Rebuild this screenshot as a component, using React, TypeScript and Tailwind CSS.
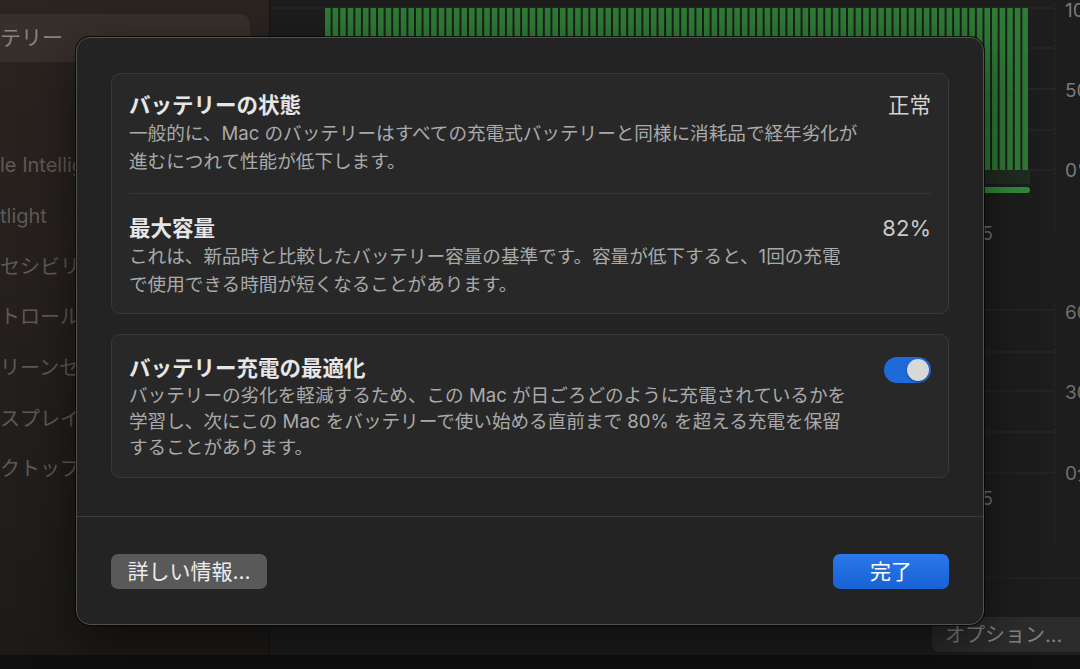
import React from 'react'

const sidebarItems = [
  'le Intelligence & Siri',
  'tlight',
  'セシビリティ',
  'トロールセンター',
  'リーンセーバ',
  'スプレイ',
  'クトップとDock',
]

const bars = Array.from({ length: 93 }, (_, i) => i)

const Chart = () => (
  <svg width="810" height="605" className="block">
    {/* 上のグラフ */}
    {[8, 48, 89, 130, 170].map((y) => (
      <line key={y} x1="0" x2="785" y1={y} y2={y} stroke="#2d2d2d" strokeWidth="1" />
    ))}
    <line x1="785" x2="785" y1="4" y2="232" stroke="#2c2c2c" strokeDasharray="2 2" />
    <rect x="55" y="170" width="705" height="14" fill="#1f2c20" />
    {bars.map((i) => (
      <rect key={i} x={55 + i * 7.58} y="8" width="5.6" height="162" fill="#2e7b35" />
    ))}
    <rect x="55" y="187" width="705" height="6" rx="3" fill="#2f8a3a" />
    <text x="795" y="17" fill="#7a7a7a" fontSize="19">100%</text>
    <text x="795" y="97" fill="#7a7a7a" fontSize="19">50%</text>
    <text x="795" y="177" fill="#7a7a7a" fontSize="19">0%</text>
    <text x="723" y="240" fill="#6f6f6f" fontSize="19" textAnchor="end">15</text>

    {/* 下のグラフ */}
    {[310, 352, 391, 432, 473].map((y) => (
      <line key={y} x1="0" x2="785" y1={y} y2={y} stroke="#2a2a2a" strokeWidth="1" />
    ))}
    <line x1="785" x2="785" y1="300" y2="545" stroke="#2a2a2a" strokeDasharray="2 2" />
    <text x="795" y="319" fill="#6f6f6f" fontSize="19">60分</text>
    <text x="795" y="399" fill="#6f6f6f" fontSize="19">30分</text>
    <text x="795" y="480" fill="#6f6f6f" fontSize="19">0分</text>
    <text x="723" y="505" fill="#6f6f6f" fontSize="19" textAnchor="end">15</text>
    <line x1="0" x2="810" y1="578" y2="578" stroke="#262626" strokeWidth="1" />
  </svg>
)

const Toggle = () => (
  <div className="w-[47px] h-[26px] rounded-full bg-[#1d6ad8] flex items-center justify-end px-[2px] shrink-0 mt-[3px]">
    <div className="w-[22px] h-[22px] rounded-full bg-[#d8d8d8] shadow-[0_1px_2px_rgba(0,0,0,0.4)]" />
  </div>
)

export default function App() {
  return (
    <div className="w-[1080px] h-[669px] relative overflow-hidden flex flex-col bg-[#111111] font-['Inter','Noto_Sans_CJK_JP',sans-serif]">
      <div className="flex h-[655px]">
        {/* サイドバー */}
        <div className="w-[270px] shrink-0 bg-linear-to-b from-[#2b2421] to-[#1d1b18] border-r border-[#141414] overflow-hidden">
          <div className="mt-[14px] w-[250px] h-[48px] rounded-r-[10px] bg-[#372f2b] flex items-center">
            <span className="text-[21px] text-[#8a837e] whitespace-nowrap">テリー</span>
          </div>
          <div className="mt-[78px] flex flex-col">
            {sidebarItems.map((t) => (
              <div key={t} className="h-[50.7px] flex items-center">
                <span className="text-[20px] text-[#5f5a56] whitespace-nowrap">{t}</span>
              </div>
            ))}
          </div>
        </div>

        {/* メイン */}
        <div className="flex-1 flex flex-col bg-[#1d1d1d] overflow-hidden">
          <Chart />
          <div className="h-[50px] flex justify-end items-start pt-[12px]">
            <div className="h-[35px] w-[160px] -mr-[12px] rounded-[7px] bg-[#2c2c2c] flex items-center pl-[13px]">
              <span className="text-[20px] text-[#838383] whitespace-nowrap">オプション...</span>
            </div>
          </div>
        </div>
      </div>
      <div className="h-[14px] bg-[#101010]" />

      {/* ダイアログ */}
      <div className="absolute left-[76px] top-[37px] w-[908px] h-[588px] rounded-[14px] bg-[#232323] border border-[#525252] shadow-[0_0_0_1px_rgba(0,0,0,0.7),0_18px_50px_rgba(0,0,0,0.55)] flex flex-col">
        <div className="px-[34px] pt-[35px] flex flex-col gap-[20px]">
          {/* カード1 */}
          <div className="h-[241px] rounded-[9px] bg-[#282828] border border-[#393939] px-[17px] pt-[17px]">
            <div className="flex justify-between">
              <div>
                <div className="text-[21.5px] leading-[28px] font-semibold text-[#e6e6e6] whitespace-nowrap">バッテリーの状態</div>
                <div className="text-[18.6px] leading-[28px] text-[#aaaaaa] whitespace-nowrap">
                  一般的に、Mac のバッテリーはすべての充電式バッテリーと同様に消耗品で経年劣化が<br />
                  進むにつれて性能が低下します。
                </div>
              </div>
              <div className="text-[21.5px] leading-[28px] text-[#d2d2d2]">正常</div>
            </div>
            <div className="h-px bg-[#353535] mt-[18px] mb-[20px]" />
            <div className="flex justify-between">
              <div>
                <div className="text-[21.5px] leading-[28px] font-semibold text-[#e6e6e6] whitespace-nowrap">最大容量</div>
                <div className="text-[18.6px] leading-[28px] text-[#aaaaaa] whitespace-nowrap">
                  これは、新品時と比較したバッテリー容量の基準です。容量が低下すると、1回の充電<br />
                  で使用できる時間が短くなることがあります。
                </div>
              </div>
              <div className="text-[22px] leading-[28px] text-[#c9c9c9]">82%</div>
            </div>
          </div>

          {/* カード2 */}
          <div className="h-[144px] rounded-[9px] bg-[#282828] border border-[#393939] px-[17px] pt-[19px] flex justify-between items-start">
            <div>
              <div className="text-[21.5px] leading-[28px] font-semibold text-[#e6e6e6] whitespace-nowrap">バッテリー充電の最適化</div>
              <div className="text-[18.6px] leading-[26px] text-[#aaaaaa] whitespace-nowrap">
                バッテリーの劣化を軽減するため、この Mac が日ごろどのように充電されているかを<br />
                学習し、次にこの Mac をバッテリーで使い始める直前まで 80% を超える充電を保留<br />
                することがあります。
              </div>
            </div>
            <Toggle />
          </div>
        </div>

        <div className="h-px bg-[#3a3a3a] mt-[38px]" />

        <div className="flex justify-between px-[34px] pt-[37px]">
          <div className="h-[35px] w-[156px] rounded-[7px] bg-[#595959] flex items-center justify-center">
            <span className="text-[21px] text-[#ececec] whitespace-nowrap">詳しい情報...</span>
          </div>
          <div className="h-[35px] w-[116px] rounded-[7px] bg-linear-to-b from-[#2a78ea] to-[#1762d4] flex items-center justify-center">
            <span className="text-[21px] text-white">完了</span>
          </div>
        </div>
      </div>
    </div>
  )
}
